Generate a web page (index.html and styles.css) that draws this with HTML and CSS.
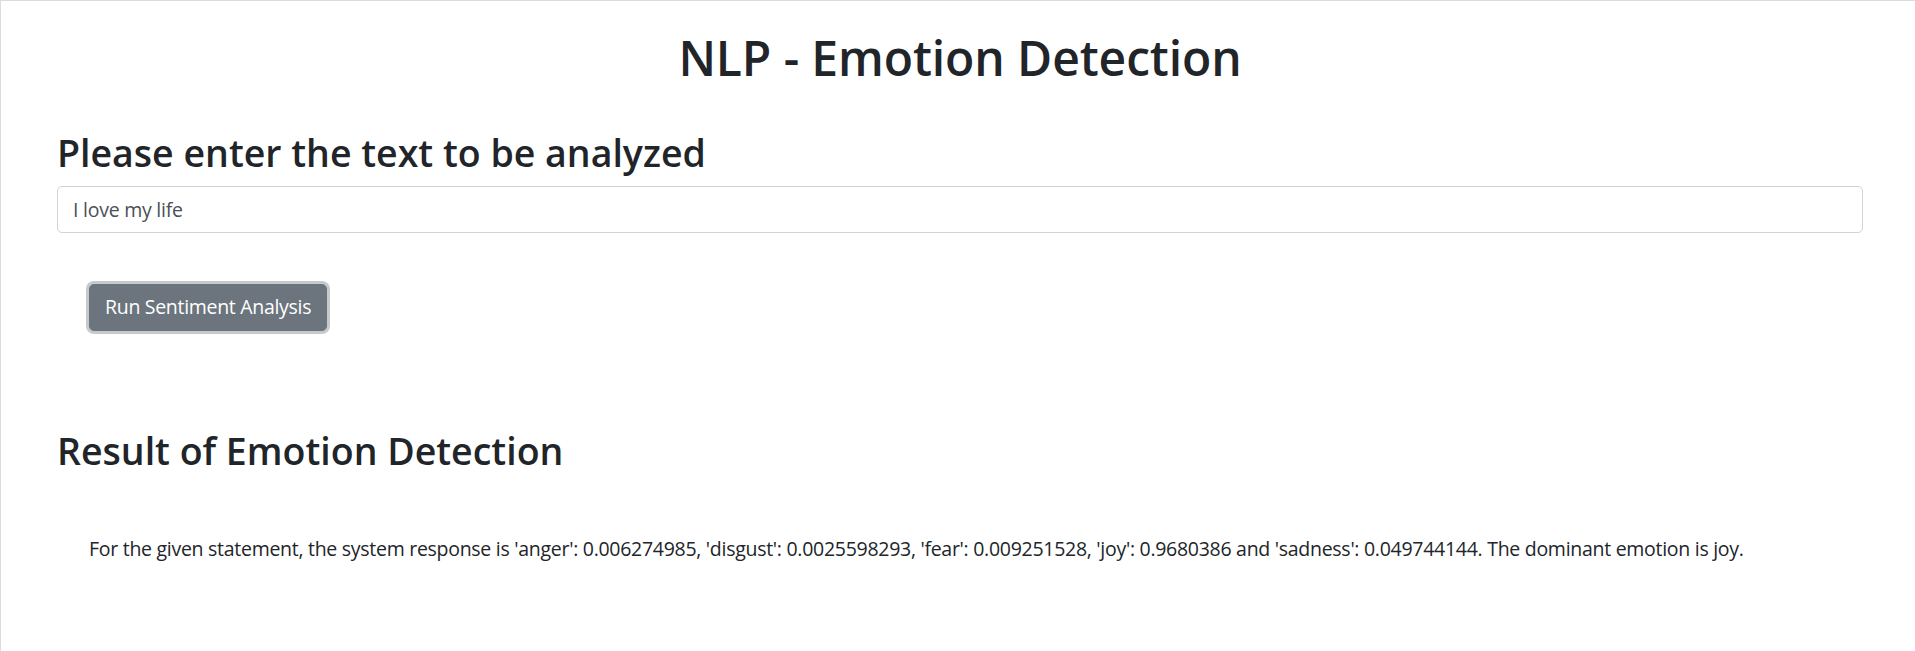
FILE: index.html
```html
<!DOCTYPE html>
<html lang="en">
<head>
<meta charset="utf-8">
<title>NLP - Emotion Detection</title>
<link rel="stylesheet" href="styles.css">
</head>
<body>
<div class="page">
  <h1 class="title">NLP - Emotion Detection</h1>
  <section class="form-section">
    <h2 class="heading">Please enter the text to be analyzed</h2>
    <input class="text-input" type="text" value="I love my life">
    <div class="actions">
      <button class="btn" type="button">Run Sentiment Analysis</button>
    </div>
  </section>
  <section class="result">
    <h2 class="heading result-heading">Result of Emotion Detection</h2>
    <p class="result-text">For the given statement, the system response is 'anger': 0.006274985, 'disgust': 0.0025598293, 'fear': 0.009251528, 'joy': 0.9680386 and 'sadness': 0.049744144. The dominant emotion is joy.</p>
  </section>
</div>
</body>
</html>
```
FILE: styles.css
```css
html, body {
  margin: 0;
  padding: 0;
  background: #ffffff;
}
body {
  font-family: "Open Sans", "Noto Sans", "Liberation Sans", sans-serif;
  font-size: 19.5px;
  letter-spacing: -0.25px;
  line-height: 1.5;
  color: #212529;
}
.page {
  min-height: 651px;
  box-sizing: border-box;
  border-left: 1px solid #dcdcdc;
  border-top: 1px solid #dcdcdc;
  padding: 28px 52px 0 56px;
}
.title {
  margin: 0;
  text-align: center;
  font-size: 48px;
  font-weight: 600;
  letter-spacing: -0.1px;
  line-height: 1.2;
}
.form-section {
  margin-top: 43px;
}
.heading {
  margin: 0;
  font-size: 37.5px;
  font-weight: 600;
  letter-spacing: 0;
  line-height: 1.2;
}
.text-input {
  display: block;
  box-sizing: border-box;
  width: 100%;
  height: 47px;
  margin-top: 11px;
  padding: 7.5px 15px;
  font: inherit;
  letter-spacing: inherit;
  color: #495057;
  background: #fff;
  border: 1px solid #ced4da;
  border-radius: 5px;
  outline: none;
}
.actions {
  padding-left: 32px;
  margin-top: 51px;
}
.btn {
  box-sizing: border-box;
  height: 47px;
  padding: 7.5px 15px;
  font: inherit;
  letter-spacing: -0.3px;
  color: #ffffff;
  background: #6c757d;
  border: 1px solid #6c757d;
  border-radius: 5px;
  box-shadow: 0 0 0 3px rgba(130, 138, 145, 0.45);
  cursor: pointer;
}
.result {
  margin-top: 97px;
}
.result-text {
  margin: 61px 0 0 32px;
  letter-spacing: -0.28px;
}
```
